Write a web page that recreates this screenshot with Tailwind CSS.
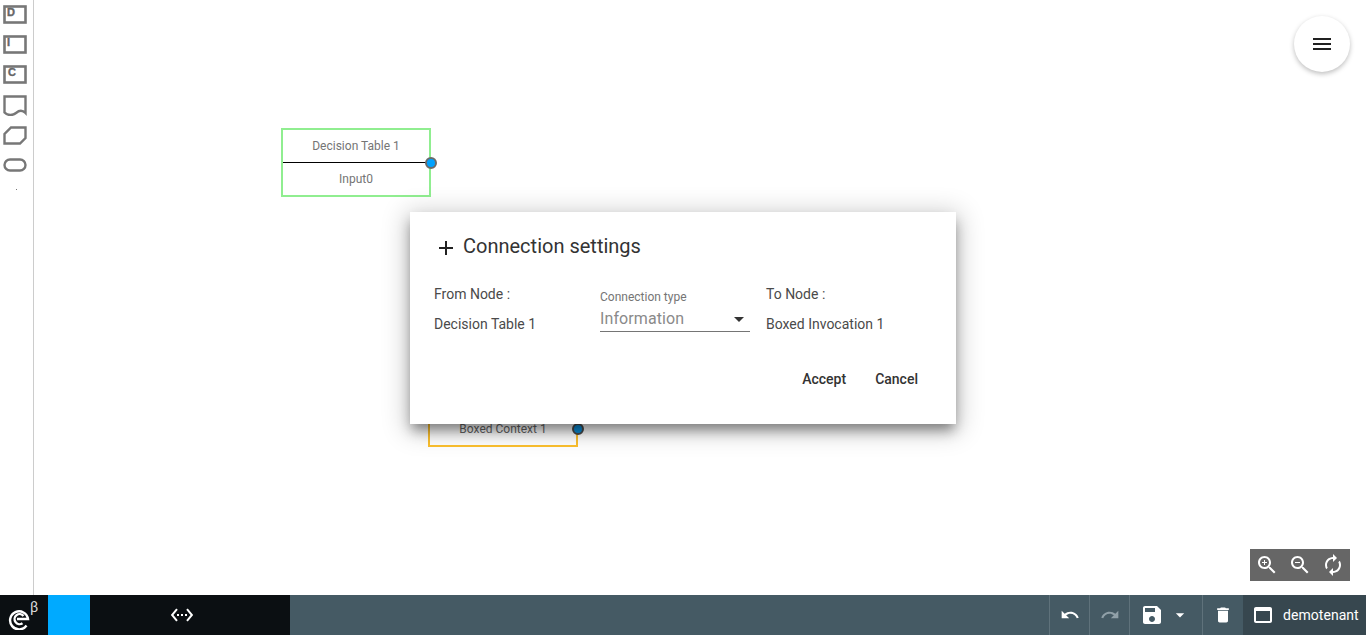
<!DOCTYPE html>
<html>
<head>
<meta charset="utf-8">
<script src="https://cdn.jsdelivr.net/npm/@tailwindcss/browser@4"></script>
</head>
<body class="m-0 overflow-hidden bg-white font-['Roboto',sans-serif]">
<div class="flex flex-col w-[1366px] h-[635px]">
  <main class="relative flex flex-1 min-h-0">
    <aside class="w-[34px] shrink-0 border-r border-[#cccccc] flex flex-col items-start pl-[3px] pt-[5px] text-[#777777]">
      <svg class="block" width="24" height="19" viewBox="0 0 24 19"><rect x="1.5" y="1.5" width="21" height="16" fill="none" stroke="#777" stroke-width="2.6"/><text x="4" y="10.5" font-size="11" font-weight="700" font-family="Liberation Sans" fill="#666" stroke="#666" stroke-width="0.4">D</text></svg>
      <svg class="block mt-[11px]" width="24" height="19" viewBox="0 0 24 19"><rect x="1.5" y="1.5" width="21" height="16" fill="none" stroke="#777" stroke-width="2.6"/><text x="4" y="11" font-size="11" font-weight="700" font-family="Liberation Sans" fill="#666" stroke="#666" stroke-width="0.4">I</text></svg>
      <svg class="block mt-[11px]" width="24" height="19" viewBox="0 0 24 19"><rect x="1.5" y="1.5" width="21" height="16" fill="none" stroke="#777" stroke-width="2.6"/><text x="5" y="10.5" font-size="11" font-weight="700" font-family="Liberation Sans" fill="#666" stroke="#666" stroke-width="0.4">C</text></svg>
      <svg class="block mt-[11px]" width="24" height="21" viewBox="0 0 24 21"><path d="M1.5 1.5H22.5V18C19 14.5 16 15.5 13 18S5 21 1.5 17.5Z" fill="none" stroke="#777" stroke-width="2.4"/></svg>
      <svg class="block mt-[10px]" width="24" height="19" viewBox="0 0 24 19"><path d="M8 1.5H22.5V12L17 17.5H1.5V8Z" fill="none" stroke="#777" stroke-width="2.4"/></svg>
      <svg class="block mt-[13px]" width="24" height="15" viewBox="0 0 24 15"><rect x="1.5" y="1.5" width="21" height="11" rx="5.5" fill="none" stroke="#777" stroke-width="2.4"/></svg>
      <span class="block w-[1px] h-[1px] bg-[#777777] ml-[13px] mt-[16px]"></span>
    </aside>

    <section class="flex-1 relative">
      <button class="absolute left-[1260px] top-[16px] w-14 h-14 rounded-full bg-white flex items-center justify-center shadow-[0_2px_5px_0_rgba(0,0,0,0.26)]">
        <svg width="24" height="24" viewBox="0 0 24 24" fill="#212121"><path d="M3 18h18v-2H3v2zm0-5h18v-2H3v2zm0-7v2h18V6H3z"/></svg>
      </button>

      <div class="absolute left-[247px] top-[128px] w-[150px] h-[69px] border-2 border-[#90ee90] flex flex-col text-xs text-[#757575]">
        <div class="h-[32px] flex items-center justify-center border-b border-black box-content">Decision Table 1</div>
        <div class="flex-1 flex items-center justify-center">Input0</div>
        <span class="absolute right-[-8px] top-[27px] w-[8px] h-[8px] rounded-full bg-[#00a2ff] border-2 border-[#6a6a6a] box-content"></span>
      </div>

      <div class="absolute left-[394px] top-[380px] w-[150px] h-[67px] border-2 border-[#fcc02e] flex items-end justify-center pb-[8px] text-xs text-[#666666]">
        Boxed Context 1
        <span class="absolute right-[-8px] top-[41px] w-[8px] h-[8px] rounded-full bg-[#0a8fdc] border-2 border-[#4a4a4a] box-content"></span>
      </div>

      <div class="absolute left-[376px] top-[212px] w-[546px] h-[212px] bg-white shadow-[0_8px_12px_-2px_rgba(0,0,0,0.42),0_4px_24px_4px_rgba(0,0,0,0.2)] flex flex-col pl-6 pr-[24px] text-sm text-[#4a4a4a]">
        <h2 class="flex items-center h-[24px] mt-[22px] text-xl text-[#333333] font-normal">
          <svg class="mr-[5px] mt-[4px]" width="24" height="24" viewBox="0 0 24 24" fill="#212121"><path d="M19 13h-6v6h-2v-6H5v-2h6V5h2v6h6v2z"/></svg>
          Connection settings
        </h2>
        <div class="flex mt-[26px] h-[62px]">
          <div class="w-[166px] flex flex-col">
            <span class="h-[20px] leading-[20px]">From Node :</span>
            <span class="h-[20px] leading-[20px] mt-[10px]">Decision Table 1</span>
          </div>
          <div class="w-[150px] flex flex-col mt-[6px]">
            <span class="text-xs text-[#757575] leading-[14px]">Connection type</span>
            <div class="flex items-center justify-between h-[24px] mt-[3px] border-b border-[#757575] box-content text-base text-[#8a8a8a] tracking-[0.1px]">
              Information
              <svg width="24" height="24" class="mr-[-1px]" viewBox="0 0 24 24" fill="#333"><path d="M7 10l5 5 5-5z"/></svg>
            </div>
          </div>
          <div class="ml-[16px] flex flex-col">
            <span class="h-[20px] leading-[20px]">To Node :</span>
            <span class="h-[20px] leading-[20px] mt-[10px]">Boxed Invocation 1</span>
          </div>
        </div>
        <div class="flex justify-end items-center mt-[23px] font-medium text-[#333333] pr-[14px] gap-[29px] text-sm">
          <button>Accept</button>
          <button>Cancel</button>
        </div>
      </div>

      <div class="absolute left-[1216px] top-[549px] w-[100px] h-[32px] bg-[#666666] flex items-center justify-around px-[1px]">
        <svg width="24" height="24" viewBox="0 0 24 24" fill="#fff"><path d="M15.5 14h-.79l-.28-.27C15.41 12.59 16 11.11 16 9.5 16 5.91 13.09 3 9.5 3S3 5.91 3 9.5 5.91 16 9.5 16c1.61 0 3.09-.59 4.23-1.57l.27.28v.79l5 4.99L20.49 19l-4.99-5zm-6 0C7.01 14 5 11.99 5 9.5S7.01 5 9.5 5 14 7.01 14 9.5 11.99 14 9.5 14z"/><path d="M12 10h-2v2H9v-2H7V9h2V7h1v2h2v1z"/></svg>
        <svg width="24" height="24" viewBox="0 0 24 24" fill="#fff"><path d="M15.5 14h-.79l-.28-.27C15.41 12.59 16 11.11 16 9.5 16 5.91 13.09 3 9.5 3S3 5.91 3 9.5 5.91 16 9.5 16c1.61 0 3.09-.59 4.23-1.57l.27.28v.79l5 4.99L20.49 19l-4.99-5zm-6 0C7.01 14 5 11.99 5 9.5S7.01 5 9.5 5 14 7.01 14 9.5 11.99 14 9.5 14zM7 9h5v1H7z"/></svg>
        <svg width="24" height="24" viewBox="0 0 24 24" fill="#fff"><path d="M12 6v3l4-4-4-4v3c-4.42 0-8 3.58-8 8 0 1.57.46 3.03 1.24 4.26L6.7 14.8c-.45-.83-.7-1.79-.7-2.8 0-3.31 2.69-6 6-6zm6.76 1.74L17.3 9.2c.44.84.7 1.79.7 2.8 0 3.31-2.69 6-6 6v-3l-4 4 4 4v-3c4.42 0 8-3.58 8-8 0-1.57-.46-3.03-1.24-4.26z"/></svg>
      </div>
    </section>
  </main>

  <footer class="h-10 shrink-0 flex items-stretch bg-[#455a64] text-white">
    <div class="w-[48px] bg-[#0b0f12] relative flex items-center">
      <svg class="ml-[8px] mt-[7px]" width="22" height="22" viewBox="0 0 22 22" fill="none" stroke="#fff" stroke-width="2.4"><path d="M18.5 17.5A9 9 0 1 1 20 11H9"/><path d="M14.5 15.2A5 5 0 1 1 15.5 8"/></svg>
      <span class="absolute left-[30px] top-[5px] text-[14px] leading-[14px] text-[#dddddd]">β</span>
    </div>
    <div class="w-[42px] bg-[#00aaff]"></div>
    <div class="w-[200px] bg-[#0b0f12] flex items-center justify-center pr-[16px]">
      <svg width="24" height="24" viewBox="0 0 24 24" fill="#fff"><path d="M7.77 6.76L6.23 5.48.82 12l5.41 6.52 1.54-1.28L3.42 12l4.35-5.24zM7 13h2v-2H7v2zm10-2h-2v2h2v-2zm-6 2h2v-2h-2v2zm6.77-7.52l-1.54 1.28L20.58 12l-4.35 5.24 1.54 1.28L23.18 12l-5.41-6.52z"/></svg>
    </div>
    <div class="flex-1"></div>
    <div class="w-[40px] border-l border-[#5f727b] flex items-center justify-center">
      <svg width="20" height="20" viewBox="0 0 24 24" fill="#fff"><path d="M12.5 8c-2.65 0-5.05.99-6.9 2.6L2 7v9h9l-3.62-3.62c1.39-1.16 3.16-1.88 5.12-1.88 3.54 0 6.55 2.31 7.6 5.5l2.37-.78C21.08 11.03 17.15 8 12.5 8z"/></svg>
    </div>
    <div class="w-[40px] border-l border-[#5f727b] flex items-center justify-center">
      <svg width="20" height="20" viewBox="0 0 24 24" fill="#90a0a8"><path d="M18.4 10.6C16.55 8.99 14.15 8 11.5 8c-4.65 0-8.58 3.03-9.96 7.22L3.9 16c1.05-3.19 4.05-5.5 7.6-5.5 1.95 0 3.73.72 5.12 1.88L13 16h9V7l-3.6 3.6z"/></svg>
    </div>
    <div class="w-[73px] border-l border-[#5f727b] flex items-center pl-[10px]">
      <svg width="24" height="24" viewBox="0 0 24 24" fill="#fff"><path d="M17 3H5c-1.11 0-2 .9-2 2v14c0 1.1.89 2 2 2h14c1.1 0 2-.9 2-2V7l-4-4zm-5 16c-1.66 0-3-1.34-3-3s1.34-3 3-3 3 1.34 3 3-1.34 3-3 3zm3-10H5V5h10v4z"/></svg>
      <svg class="ml-[6px]" width="20" height="20" viewBox="0 0 24 24" fill="#fff"><path d="M7 10l5 5 5-5z"/></svg>
    </div>
    <div class="w-[40px] border-l border-[#5f727b] flex items-center justify-center">
      <svg width="20" height="20" viewBox="0 0 24 24" fill="#fff"><path d="M6 19c0 1.1.9 2 2 2h8c1.1 0 2-.9 2-2V7H6v12zM19 4h-3.5l-1-1h-5l-1 1H5v2h14V4z"/></svg>
    </div>
    <div class="w-[124px] bg-[#37474f] border-l border-[#455a64] flex items-center pl-[8px] text-sm tracking-[0.05px]">
      <svg class="mr-[8px]" width="24" height="24" viewBox="0 0 24 24" fill="#fff"><path d="M19 4H5c-1.11 0-2 .9-2 2v12c0 1.1.89 2 2 2h14c1.1 0 2-.9 2-2V6c0-1.1-.89-2-2-2zm0 14H5V8h14v10z"/></svg>
      demotenant
    </div>
  </footer>
</div>
</body>
</html>
